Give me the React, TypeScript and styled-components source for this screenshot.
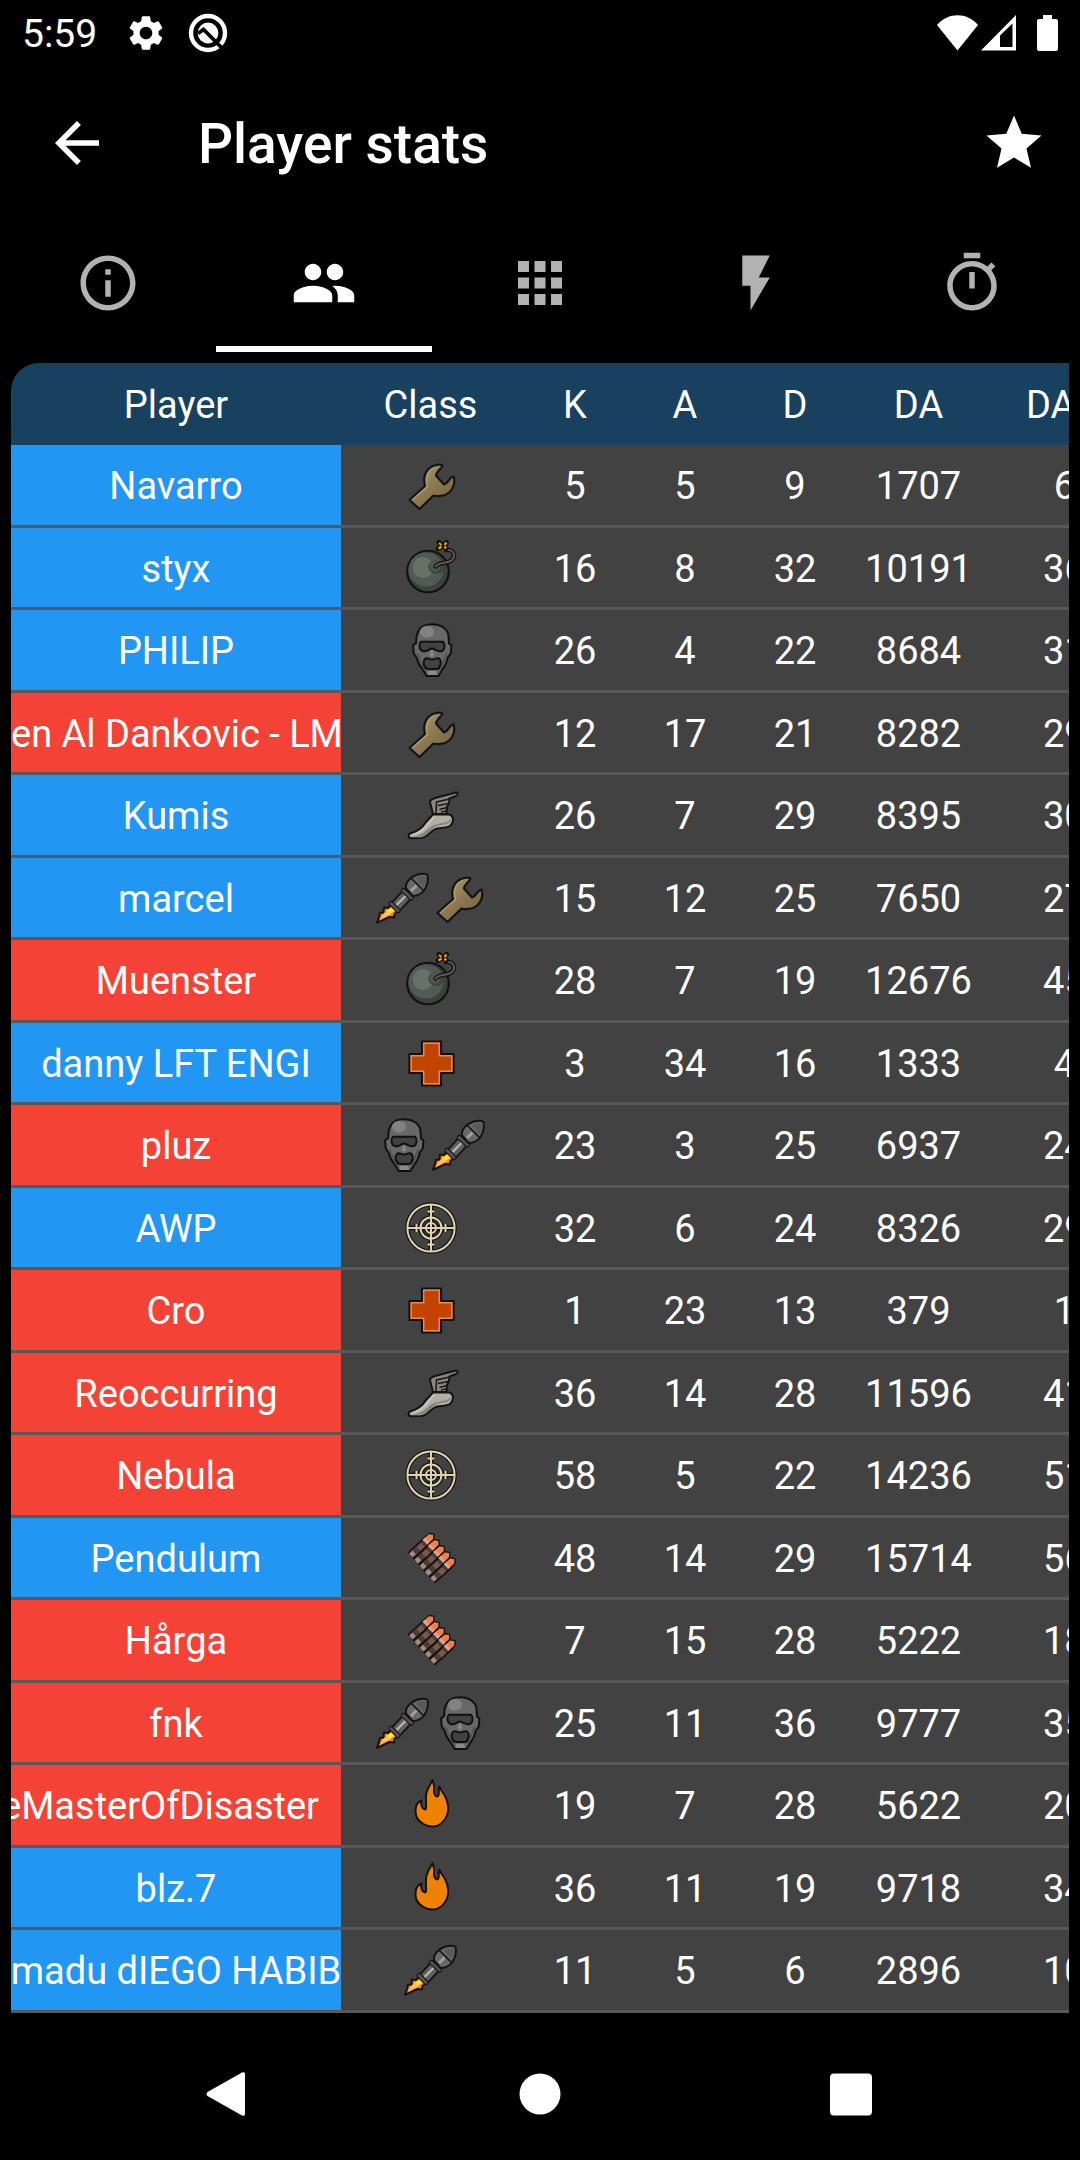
import React from "react";
import styled, { createGlobalStyle } from "styled-components";
import {
  MdApps,
  MdArrowBack,
  MdFlashOn,
  MdInfoOutline,
  MdPeople,
  MdSettings,
  MdStar,
} from "react-icons/md";

const GlobalStyle = createGlobalStyle`
  *, *::before, *::after { box-sizing: border-box; }
  body {
    margin: 0;
    background: #000;
    color: #fff;
    font-family: Roboto, "Noto Sans", sans-serif;
  }
`;

const Screen = styled.div`
  display: flex;
  flex-direction: column;
  min-height: 100vh;
  background: #000;
`;

/* Status bar */

const StatusBar = styled.div`
  display: flex;
  align-items: center;
  justify-content: space-between;
  height: 66px;
  padding: 0 21px 0 22px;
`;

const StatusGroup = styled.div<{ $gap: number }>`
  display: flex;
  align-items: center;
  gap: ${(p) => p.$gap}px;

  svg {
    display: block;
  }
`;

const Clock = styled.span`
  margin-right: 8px;
  padding-top: 2px;
  font-size: 39px;
  line-height: 46px;
`;

/* App bar */

const AppBar = styled.header`
  display: flex;
  align-items: center;
  height: 154px;
  padding: 0 33px 0 44px;
`;

const IconButton = styled.button`
  display: grid;
  place-items: center;
  padding: 0;
  border: 0;
  background: none;
  color: #fff;
  cursor: pointer;

  svg {
    display: block;
    width: 66px;
    height: 66px;
  }
`;

const Title = styled.h1`
  flex: 1;
  margin: 0 0 0 88px;
  padding-top: 2px;
  font-size: 55px;
  font-weight: 500;
  line-height: 66px;
`;

/* Tabs */

const Tabs = styled.div`
  display: grid;
  grid-template-columns: repeat(5, 1fr);
  height: 132px;
`;

const Tab = styled(IconButton)<{ $active: boolean }>`
  color: ${(p) => (p.$active ? "#fff" : "#b2b2b2")};
  border-bottom: 6px solid ${(p) => (p.$active ? "#fff" : "transparent")};
`;

/* Stats table */

const TableCard = styled.main`
  margin: 11px 11px 0;
  overflow-x: auto;
  scrollbar-width: none;
  border-top-left-radius: 28px;
`;

const StatsTable = styled.table`
  width: 1152px;
  min-width: 100%;
  table-layout: fixed;
  border-collapse: separate;
  border-spacing: 0;
  font-size: 38px;
  line-height: 46px;
  text-align: center;
`;

const Col = styled.col<{ $width: number }>`
  width: ${(p) => p.$width}px;
`;

const HeadCell = styled.th`
  height: 82px;
  padding: 2px 0 0;
  background: #18405f;
  font-weight: 400;
`;

const Row = styled.tr`
  height: 83px;

  &:nth-child(even) {
    height: 82px;
  }
`;

const Cell = styled.td`
  padding: 2px 0 0;
  background: #424242;
  border-bottom: 3px solid #585858;
`;

const ClassCell = styled(Cell)`
  padding: 0;
`;

type Team = "blue" | "red";
type Fit = "start" | "center" | "end";

const PlayerCell = styled.th<{ $team: Team }>`
  padding: 2px 0 0;
  overflow: hidden;
  background: ${(p) => (p.$team === "blue" ? "#2196f3" : "#f44336")};
  background-clip: padding-box;
  border-bottom: 3px solid #585858;
  font-weight: 400;
`;

const PlayerName = styled.div<{ $fit: Fit }>`
  display: flex;
  justify-content: ${(p) => (p.$fit === "center" ? "center" : `flex-${p.$fit}`)};
  padding: 0 ${(p) => (p.$fit === "end" ? 22 : 0)}px 0 0;
  overflow: hidden;
  white-space: nowrap;
`;

const ClassIcons = styled.div`
  display: flex;
  justify-content: center;

  svg {
    display: block;
    width: 56px;
    height: 56px;
  }
`;

/* System navigation */

const NavBar = styled.nav`
  display: grid;
  grid-template-columns: repeat(3, 1fr);
  height: 132px;
  margin-top: auto;
  padding: 0 72px;
`;

const Outline = "#141414";

const Stopwatch = () => (
  <svg viewBox="0 0 24 24" fill="currentColor">
    <path d="M15 1H9v2h6V1zm-4 13h2V8h-2v6zm8.030-6.610l1.420-1.420c-.430-.510-.900-.990-1.410-1.410l-1.420 1.420C16.070 4.740 14.120 4 12 4c-4.970 0-9 4.030-9 9s4.020 9 9 9 9-4.030 9-9c0-2.120-.740-4.070-1.970-5.610zM12 20c-3.870 0-7-3.130-7-7s3.130-7 7-7 7 3.130 7 7-3.130 7-7 7z" />
  </svg>
);

const Wrench = () => (
  <svg viewBox="0 0 56 56" role="img" aria-label="Engineer">
    <defs>
      <linearGradient id="brass" x1="0" y1="0" x2="1" y2="1">
        <stop offset="0.2" stopColor="#a8946c" />
        <stop offset="0.5" stopColor="#8b7750" />
        <stop offset="1" stopColor="#75633f" />
      </linearGradient>
    </defs>
    <path
      d="M6.500 43 L22 29 C19.500 20 23 12 29.500 9.200 C34 7.500 37.500 7.200 39.500 8.500 C40 10.500 34 13 33 18.500 L41 27.500 C45.500 26.500 47 19 50.500 19.500 C52.500 25 50.500 32 46 35.500 C41 39.500 35.500 39.500 30.500 38.500 L16.500 52 Z"
      fill="url(#brass)"
      stroke={Outline}
      strokeWidth="2.200"
      strokeLinejoin="round"
    />
    <path d="M9 43 L24.500 29.500 C22 21 25 13 32 10.500" fill="none" stroke="#bda97e" strokeWidth="1.200" opacity="0.7" />
  </svg>
);

const Bomb = () => (
  <svg viewBox="1 0 56 56" role="img" aria-label="Demoman">
    <circle cx="26" cy="31.500" r="20.800" fill="#39423c" stroke="#101010" strokeWidth="2" />
    <ellipse cx="24" cy="29.500" rx="17.500" ry="17" fill="#515b54" />
    <circle cx="21" cy="27.500" r="10.500" fill="#667168" />
    <path d="M26.500 25 C28 20 34 19 38 21.500 L42 29 C42 33 35 35.500 30.500 33 C27 31 26 28 26.500 25 Z" fill="#3e4741" />
    <circle cx="33" cy="26" r="5.500" fill="#4d5750" />
    <path d="M33.500 26.500 C38 21.500 45.500 24 50 20 C54 16 52 9 44 10" fill="none" stroke="#161412" strokeWidth="4.400" strokeLinecap="round" />
    <path d="M33.500 26.500 C38 21.500 45.500 24 50 20 C54 16 52 9 44 10" fill="none" stroke="#66594d" strokeWidth="1.900" strokeLinecap="round" />
    <path d="M37 2.500 L39.500 4.500 M44.500 2.500 L42 5 M36 8.500 L39.500 6.500 M44 8.500 L42.500 6.500" stroke="#171208" strokeWidth="5" strokeLinecap="round" />
    <path d="M37 3 L39.500 5 M44.500 2.500 L42.500 5 M36.500 8.500 L39.500 6.500 M44 8.500 L42.500 6.500" stroke="#f59a10" strokeWidth="2.200" />
  </svg>
);

const Mask = () => (
  <svg viewBox="0 0 56 56" role="img" aria-label="Spy">
    <path
      d="M29 2.200 C38 2.200 45 7 45.500 14 L46 21.500 L48.500 23.500 L47.700 31.500 L44.500 36 C44 43 39 47 35.500 54 L23.500 54 C21 47 15 44 14 36.500 L10.800 31.500 L10 23.500 L13.200 21 C13 11 16 2.200 29 2.200 Z"
      fill="#686868"
      stroke="#101010"
      strokeWidth="2"
      strokeLinejoin="round"
    />
    <ellipse cx="24" cy="9.700" rx="7" ry="6" fill="#828282" />
    <path d="M29 26 L31 33 L29 35 L26.500 33 Z M25 49 h8 l1 4 h-9 Z" fill="#8a8a8a" />
    <path d="M14 32 C18 37 17 43 23 49 M44 32 C40 37 41 43 36 49" fill="none" stroke="#505050" strokeWidth="1.500" />
    <path
      d="M18 19.800 H40 C42.500 22 42 27.500 39 29 C34 30.500 33 27 29 26.500 C25.500 27 24 30.500 19.500 29 C16 27.500 15.500 22 18 19.800 Z"
      fill="#424242"
      stroke="#101010"
      strokeWidth="2"
    />
    <path
      d="M22.500 36.500 C25 35.500 26.500 37.500 29 37.500 C31.500 37.500 33.500 35.500 36 36.500 C39.500 39.500 37 47 33.500 47 H25.500 C21 47 19 39.500 22.500 36.500 Z"
      fill="#424242"
      stroke="#101010"
      strokeWidth="2"
    />
  </svg>
);

const WingedFoot = () => (
  <svg viewBox="0 0 56 56" role="img" aria-label="Scout">
    <path
      d="M30 27 L26.800 14.500 C28 12.500 30 11.500 33 10.800 L53 5.500 C55.500 5.500 55 8.500 53 9 L46.500 11.500 L46 16 L44 20 L43.500 27 Z"
      fill="#8b877c"
      stroke="#141414"
      strokeWidth="2"
      strokeLinejoin="round"
    />
    <path d="M46.500 12 L33.500 15 L33 26 M45.500 16.500 L35 18.500 M44 20.500 L36.500 22.500 M43.500 24 L38 25" fill="none" stroke="#1a1a18" strokeWidth="1.600" />
    <path
      d="M30 27.500 H46.500 C51 29 51 35 47.500 38.500 C42 42.500 36 39.500 31.500 42.500 C26.500 45.500 24 50.500 18.500 51 L8 51.200 C5 51 5 47 7.500 46.200 C15 44.500 19 41.500 23 35 Z"
      fill="#b2b0a4"
      stroke="#141414"
      strokeWidth="2"
      strokeLinejoin="round"
    />
    <path d="M48.500 31 C47 40 38 36 32 40 C27 43.500 24 49 17 49.600 L9 50 C18 48 22 45 27 40.500 C33 35 44 38 48.500 31 Z" fill="#85837a" />
    <path d="M31 29.500 L25 37 C21 43 17 46 10 47.500" fill="none" stroke="#cbc9be" strokeWidth="1.500" />
  </svg>
);

const Rocket = () => (
  <svg viewBox="1 0 56 56" role="img" aria-label="Soldier">
    <path d="M3 52.800 C4.500 48 6 46.500 5.800 43 L9.500 42.500 L10 37.500 L14 38 L18 34 L23.500 41.500 L20.500 44 L20 47.500 L15.500 47 Z" fill="#f28a10" stroke="#151210" strokeWidth="2" strokeLinejoin="round" />
    <path d="M5.500 50 L9 44.500 L13 41 L18 38 L20 41 L15 45 Z" fill="#ffc070" />
    <path d="M12 41 L18.500 37 L20.500 40.500 L16 43.500 Z" fill="#ffe62a" />
    <path d="M20 38.500 L35 22.500" stroke="#121212" strokeWidth="13" />
    <path d="M21 37.500 L35 22.500" stroke="#5e5e5e" strokeWidth="9.500" />
    <path d="M22.500 35 L31.500 26" stroke="#b5b5b5" strokeWidth="2.400" />
    <path d="M17 33.500 L24 40.500 M29.300 20.500 L37.500 28" stroke="#121212" strokeWidth="5" strokeLinecap="round" />
    <path d="M17 33.500 L24 40.500 M29.300 20.500 L37.500 28" stroke="#5b504b" strokeWidth="3" strokeLinecap="round" />
    <path d="M32 18.500 C31 12.500 36.500 7 43.500 4.500 C48 3.500 52 3 53.500 5 C54.500 9 53 15.500 50.500 20 C47 24.500 42.500 26 38.500 26 Z" fill="#696969" stroke="#121212" strokeWidth="2" strokeLinejoin="round" />
    <path d="M37 21 L42.500 15.500" stroke="#a2a2a2" strokeWidth="2.800" />
    <path d="M37.500 8.500 L49.500 20.500" stroke="#121212" strokeWidth="1.600" />
    <path d="M41.500 8.500 L49.500 17 C52 13 52.500 9 52 6.500 C48 5 44 6.500 41.500 8.500 Z" fill="#5a5a5a" />
  </svg>
);

const Cross = () => (
  <svg viewBox="0 0 56 56" role="img" aria-label="Medic">
    <path d="M19 6.500 H38 V19 H50.500 V38 H38 V50.500 H19 V38 H6.500 V19 H19 Z" fill="#c24400" stroke="#141010" strokeWidth="2.200" strokeLinejoin="round" />
    <path d="M20.700 8.200 H36.300 V20.700 H48.800 V36.300 H36.300 V48.800 H20.700 V36.300 H8.200 V20.700 H20.700 Z" fill="none" stroke="#e58a58" strokeWidth="1.500" />
  </svg>
);

const scopeLines = "M28 4 V52 M4 28 H52 M13.500 24 V32 M42.500 24 V32 M24.500 11.500 H31.500 M24.500 44.500 H31.500";

const Scope = () => (
  <svg viewBox="0 0 56 56" role="img" aria-label="Sniper">
    {[
      { color: "#141414", width: 4.4 },
      { color: "#e2d3ad", width: 2 },
    ].map((s) => (
      <g key={s.color} fill="none" stroke={s.color} strokeWidth={s.width}>
        <circle cx="28" cy="28" r="23.600" />
        <circle cx="28" cy="28" r="10.500" />
        <circle cx="28" cy="28" r="5" />
        <path d={scopeLines} />
      </g>
    ))}
  </svg>
);

const Ammo = () => (
  <svg viewBox="0 0 56 56" role="img" aria-label="Heavy">
    {[0, 1, 2, 3, 4].map((i) => (
      <g key={i} transform={`translate(${i * 5.3} ${i * 6.1})`}>
        <path d="M4.500 22.500 L20.500 7.500 L26.500 2.800 L31.500 3.800 L31.500 9 L27.500 14 L11 29 Z" fill="#171211" />
        <path d="M8.500 25 L24 10.800" stroke="#4e3d36" strokeWidth="6" />
        <path d="M7.800 25.500 L11.200 22.400" stroke="#a98a7b" strokeWidth="5" />
        <path d="M15.500 19 L20 15" stroke="#775a4e" strokeWidth="5.500" />
        <path d="M19.800 9.500 L26 4.200 L30.200 4.800 L30 9 L24.500 14.200 Z" fill="#f07f48" />
        <path d="M19.500 9.800 L22 7.800 L26.300 12.300 L24.200 14.500 Z" fill="#dba68c" />
      </g>
    ))}
  </svg>
);

const Flame = () => (
  <svg viewBox="0 0 56 56" role="img" aria-label="Pyro">
    <path
      d="M29.500 3 C30.500 7 32 8.500 31 13 C30.500 17.500 33 20.500 35 19 C37 17 34.500 13 36.500 9.500 C38 14 40.500 16 42.500 20 C45.500 26.500 46 33 44 38.500 C41.500 45 36 49.500 30 49.500 C24 50 16 45.500 13.500 40 C11.500 34 12 26 18.500 23.500 C17.500 27 18.500 32 22.500 32.500 C24 30 22.500 25 23 19 C23.500 12 27 8.500 29.500 3 Z"
      fill="#ef8200"
      stroke="#15120e"
      strokeWidth="2"
      strokeLinejoin="round"
    />
  </svg>
);

const classIcons = {
  engineer: Wrench,
  demoman: Bomb,
  spy: Mask,
  scout: WingedFoot,
  soldier: Rocket,
  medic: Cross,
  sniper: Scope,
  heavy: Ammo,
  pyro: Flame,
};

type ClassName = keyof typeof classIcons;

interface Player {
  name: string;
  team: Team;
  classes: ClassName[];
  stats: number[];
  fit?: Fit;
}

const players: Player[] = [
  { name: "Navarro", team: "blue", classes: ["engineer"], stats: [5, 5, 9, 1707, 61] },
  { name: "styx", team: "blue", classes: ["demoman"], stats: [16, 8, 32, 10191, 365] },
  { name: "PHILIP", team: "blue", classes: ["spy"], stats: [26, 4, 22, 8684, 311] },
  { name: "en Al Dankovic - LM", team: "red", classes: ["engineer"], stats: [12, 17, 21, 8282, 296], fit: "start" },
  { name: "Kumis", team: "blue", classes: ["scout"], stats: [26, 7, 29, 8395, 300] },
  { name: "marcel", team: "blue", classes: ["soldier", "engineer"], stats: [15, 12, 25, 7650, 274] },
  { name: "Muenster", team: "red", classes: ["demoman"], stats: [28, 7, 19, 12676, 454] },
  { name: "danny LFT ENGI", team: "blue", classes: ["medic"], stats: [3, 34, 16, 1333, 47] },
  { name: "pluz", team: "red", classes: ["spy", "soldier"], stats: [23, 3, 25, 6937, 248] },
  { name: "AWP", team: "blue", classes: ["sniper"], stats: [32, 6, 24, 8326, 298] },
  { name: "Cro", team: "red", classes: ["medic"], stats: [1, 23, 13, 379, 13] },
  { name: "Reoccurring", team: "red", classes: ["scout"], stats: [36, 14, 28, 11596, 415] },
  { name: "Nebula", team: "red", classes: ["sniper"], stats: [58, 5, 22, 14236, 510] },
  { name: "Pendulum", team: "blue", classes: ["heavy"], stats: [48, 14, 29, 15714, 563] },
  { name: "Hårga", team: "red", classes: ["heavy"], stats: [7, 15, 28, 5222, 187] },
  { name: "fnk", team: "red", classes: ["soldier", "spy"], stats: [25, 11, 36, 9777, 350] },
  { name: "eMasterOfDisaster", team: "red", classes: ["pyro"], stats: [19, 7, 28, 5622, 201], fit: "end" },
  { name: "blz.7", team: "blue", classes: ["pyro"], stats: [36, 11, 19, 9718, 348] },
  { name: "madu dIEGO HABIB", team: "blue", classes: ["soldier"], stats: [11, 5, 6, 2896, 103] },
];

const columns = [
  { label: "Player", width: 330 },
  { label: "Class", width: 179 },
  { label: "K", width: 110 },
  { label: "A", width: 110 },
  { label: "D", width: 110 },
  { label: "DA", width: 137 },
  { label: "DA/M", width: 176 },
];

const tabs = [
  { label: "Info", Icon: MdInfoOutline },
  { label: "Players", Icon: MdPeople },
  { label: "Classes", Icon: MdApps },
  { label: "Rounds", Icon: MdFlashOn },
  { label: "Timeline", Icon: Stopwatch },
];

export default function App() {
  const [active, setActive] = React.useState(1);

  return (
    <>
      <GlobalStyle />
      <Screen>
        <StatusBar>
          <StatusGroup $gap={20}>
            <Clock>5:59</Clock>
            <MdSettings size={42} />
            <svg width="42" height="42" viewBox="0 0 42 42">
              <circle cx="21" cy="21" r="17" fill="none" stroke="#fff" strokeWidth="4.400" />
              <circle cx="21" cy="21" r="10.400" fill="#fff" />
              <path d="M11 21.500 L16.500 17.500 L35 36" fill="none" stroke="#000" strokeWidth="3.800" />
            </svg>
          </StatusGroup>
          <StatusGroup $gap={3}>
            <svg width="41" height="36" viewBox="0 0 41 36">
              <path d="M0 10 C11 -3 30 -3 41 10 L20.500 35.500 Z" fill="#fff" />
            </svg>
            <svg width="36" height="36" viewBox="0 0 36 36">
              <path fillRule="evenodd" d="M0 35.500 L35 0 V35.500 Z M19 20.500 V32 H31.500 V8.500 Z" fill="#fff" />
            </svg>
            <svg width="39" height="36" viewBox="0 0 39 36">
              <path d="M23 0 H32 V4 H36 Q38 4 38 6 V34 Q38 36 36 36 H19 Q17 36 17 34 V6 Q17 4 19 4 H23 Z" fill="#fff" />
            </svg>
          </StatusGroup>
        </StatusBar>

        <AppBar>
          <IconButton type="button" aria-label="Back">
            <MdArrowBack />
          </IconButton>
          <Title>Player stats</Title>
          <IconButton type="button" aria-label="Favorite">
            <MdStar />
          </IconButton>
        </AppBar>

        <Tabs role="tablist">
          {tabs.map(({ label, Icon }, i) => (
            <Tab
              key={label}
              type="button"
              role="tab"
              aria-label={label}
              aria-selected={i === active}
              $active={i === active}
              onClick={() => setActive(i)}
            >
              <Icon />
            </Tab>
          ))}
        </Tabs>

        <TableCard>
          <StatsTable>
            <colgroup>
              {columns.map((c) => (
                <Col key={c.label} $width={c.width} />
              ))}
            </colgroup>
            <thead>
              <tr>
                {columns.map((c) => (
                  <HeadCell key={c.label} scope="col">
                    {c.label}
                  </HeadCell>
                ))}
              </tr>
            </thead>
            <tbody>
              {players.map((p) => (
                <Row key={p.name}>
                  <PlayerCell scope="row" $team={p.team}>
                    <PlayerName $fit={p.fit ?? "center"}>{p.name}</PlayerName>
                  </PlayerCell>
                  <ClassCell>
                    <ClassIcons>
                      {p.classes.map((c) => {
                        const Icon = classIcons[c];
                        return <Icon key={c} />;
                      })}
                    </ClassIcons>
                  </ClassCell>
                  {p.stats.map((value, i) => (
                    <Cell key={i}>{value}</Cell>
                  ))}
                </Row>
              ))}
            </tbody>
          </StatsTable>
        </TableCard>

        <NavBar>
          <IconButton type="button" aria-label="System back">
            <svg viewBox="0 0 66 66">
              <path d="M12.500 35 Q10.500 33 12.500 31 L47 11.500 Q50 10.500 50 13 V53 Q50 55.500 47 54.500 Z" fill="#fff" />
            </svg>
          </IconButton>
          <IconButton type="button" aria-label="Home">
            <svg viewBox="0 0 66 66">
              <circle cx="33" cy="33" r="20.500" fill="#fff" />
            </svg>
          </IconButton>
          <IconButton type="button" aria-label="Recent apps">
            <svg viewBox="0 0 66 66">
              <rect x="11" y="12.500" width="42" height="42" rx="4" fill="#fff" />
            </svg>
          </IconButton>
        </NavBar>
      </Screen>
    </>
  );
}
